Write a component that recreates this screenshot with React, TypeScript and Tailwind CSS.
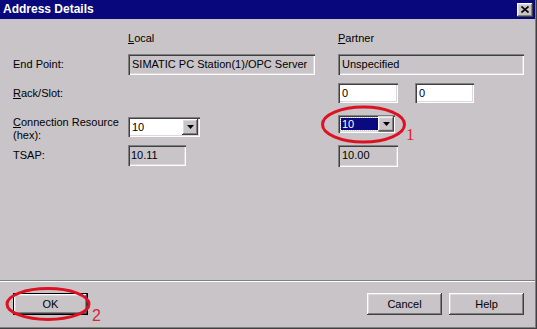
import React from "react"

// classic 3D edges
const sunken =
  "shadow-[inset_1px_1px_0_#808080,inset_2px_2px_0_#404040,inset_-1px_-1px_0_#ffffff,inset_-2px_-2px_0_#dcd8dc]"
const raised =
  "shadow-[inset_-1px_-1px_0_#404040,inset_1px_1px_0_#ffffff,inset_-2px_-2px_0_#808080,inset_2px_2px_0_#dcd8dc]"

function DropArrow() {
  return (
    <div className={`w-[16px] h-[16px] bg-[#c8c4c8] flex items-center justify-center ${raised}`}>
      <svg width="7" height="4" viewBox="0 0 7 4">
        <polygon points="0,0 7,0 3.5,4" fill="#000" />
      </svg>
    </div>
  )
}

function Btn({ label, isDefault }: { label: string; isDefault?: boolean }) {
  return (
    <div
      className={`w-[75px] h-[22px] flex items-center justify-center bg-[#c8c4c8] ${
        isDefault ? "border border-black" : ""
      }`}
    >
      <div className={`w-full h-full flex items-center justify-center ${raised}`}>{label}</div>
    </div>
  )
}

export default function App() {
  return (
    <div className="relative w-[537px] h-[329px] bg-[#c8c4c8] flex flex-col overflow-hidden shadow-[inset_-1px_-1px_0_#404040,inset_-2px_-2px_0_#808080] font-['Liberation_Sans',Arial,sans-serif] text-[11px] leading-[13px] text-black">
      {/* title bar */}
      <div className="h-[19px] mr-[2px] bg-[#08087c] flex items-center justify-between pl-[3px] pr-[2px]">
        <span className="text-white font-bold text-[12px]">Address Details</span>
        <div className={`w-[16px] h-[14px] bg-[#c8c4c8] flex items-center justify-center ${raised}`}>
          <svg width="8" height="7" viewBox="0 0 8 7">
            <path d="M0.5 0.5 L7.5 6.5 M7.5 0.5 L0.5 6.5" stroke="#000" strokeWidth="1.6" />
          </svg>
        </div>
      </div>

      <div className="pl-[13px] pt-[13px]">
        {/* column headers */}
        <div className="flex h-[13px]">
          <div className="w-[115px]" />
          <div className="w-[210px]">
            <span className="underline">L</span>ocal
          </div>
          <div>
            <span className="underline">P</span>artner
          </div>
        </div>

        {/* end point */}
        <div className="flex items-center h-[21px] mt-[9px]">
          <div className="w-[115px]">End Point:</div>
          <div className="w-[210px]">
            <div className={`w-[187px] h-[21px] flex items-center pl-[4px] ${sunken}`}>
              SIMATIC PC Station(1)/OPC Server
            </div>
          </div>
          <div className={`w-[186px] h-[21px] flex items-center pl-[4px] ${sunken}`}>Unspecified</div>
        </div>

        {/* rack/slot */}
        <div className="flex items-center h-[20px] mt-[8px]">
          <div className="w-[115px]">
            <span className="underline">R</span>ack/Slot:
          </div>
          <div className="w-[210px]" />
          <div className={`w-[60px] h-[20px] bg-white flex items-center pl-[4px] ${sunken}`}>0</div>
          <div className={`w-[59px] h-[20px] ml-[17px] bg-white flex items-center pl-[4px] ${sunken}`}>0</div>
        </div>

        {/* connection resource */}
        <div className="flex h-[26px] mt-[12px]">
          <div className="w-[115px] pt-[1px]">
            <span className="underline">C</span>onnection Resource
            <br />
            (hex):
          </div>
          <div className="w-[210px] pt-[2px]">
            <div className={`w-[72px] h-[20px] bg-white flex items-center justify-between pl-[4px] pr-[2px] ${sunken}`}>
              <span>10</span>
              <DropArrow />
            </div>
          </div>
          <div className={`w-[57px] h-[18px] bg-white flex items-center justify-between pl-[3px] pr-[1px] ${sunken}`}>
            <div className="w-[37px] h-[12px] bg-[#0a0a80] text-white flex items-center pl-[1px] outline outline-1 outline-dotted outline-[#c8c4c8]">
              10
            </div>
            <div className="scale-y-[0.94]">
              <DropArrow />
            </div>
          </div>
        </div>

        {/* tsap */}
        <div className="flex items-center h-[21px] mt-[4px]">
          <div className="w-[115px]">TSAP:</div>
          <div className="w-[210px]">
            <div className={`w-[58px] h-[21px] flex items-center pl-[3px] ${sunken}`}>10.11</div>
          </div>
          <div className={`w-[60px] h-[22px] flex items-center pl-[4px] ${sunken}`}>10.00</div>
        </div>
      </div>

      <div className="flex-1" />

      {/* etched separator */}
      <div className="mr-[2px] h-[2px] border-t border-[#808080] border-b border-b-white" />

      {/* buttons */}
      <div className="flex mt-[11px] mb-[14px] pl-[13px] pr-[13px]">
        <Btn label="OK" isDefault />
        <div className="flex-1" />
        <div className="flex gap-[7px]">
          <Btn label="Cancel" />
          <Btn label="Help" />
        </div>
      </div>

      {/* red annotations */}
      <svg className="absolute left-0 top-0 pointer-events-none" width="537" height="329">
        <ellipse cx="363.5" cy="124.5" rx="41" ry="17.5" fill="none" stroke="#dd1122" strokeWidth="3" />
        <ellipse cx="48" cy="304" rx="41" ry="15.5" fill="none" stroke="#dd1122" strokeWidth="3" />
      </svg>
      <div className="absolute left-[406px] top-[127px] text-[17px] leading-[16px] text-[#dd2233] font-['Liberation_Serif',serif]">
        1
      </div>
      <div className="absolute left-[92px] top-[308px] text-[16px] leading-[16px] text-[#dd2233]">2</div>
    </div>
  )
}
